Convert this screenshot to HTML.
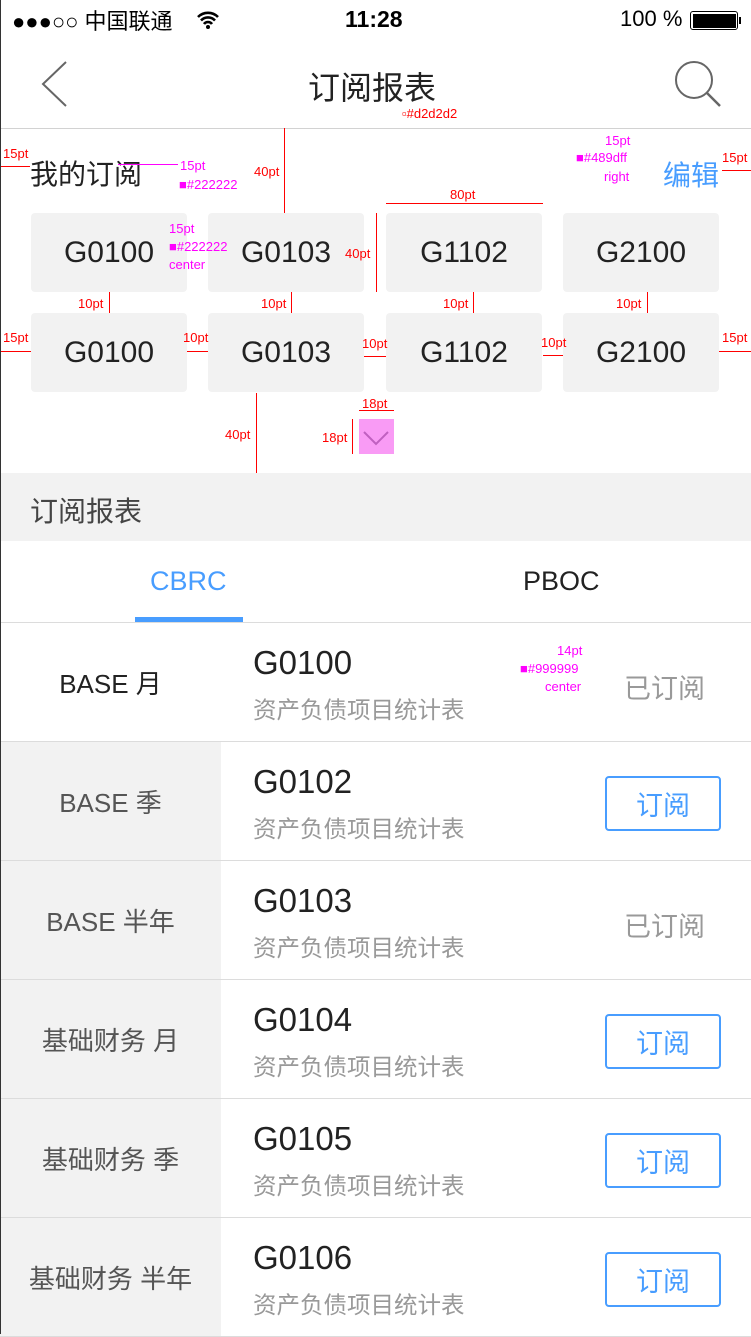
<!DOCTYPE html>
<html><head><meta charset="utf-8"><style>
*{margin:0;padding:0;box-sizing:border-box}
body{width:751px;height:1334px;position:relative;overflow:hidden;background:#fff;font-family:"Liberation Sans","Noto Sans CJK SC",sans-serif;color:#222}
.a{position:absolute;white-space:nowrap}
.tile{position:absolute;width:156px;height:79px;background:#f2f2f2;border-radius:4px;font-size:30px;color:#222;display:flex;align-items:center;justify-content:center}
.row{position:absolute;left:0;width:751px;height:119px;border-bottom:1px solid #dcdcdc}
.lc{position:absolute;left:0;top:0;width:221px;height:118px;background:#f2f2f2;display:flex;align-items:center;justify-content:center;font-size:26px;color:#555}
.code{position:absolute;left:253px;top:21px;font-size:33px;color:#222}
.sub{position:absolute;left:253px;top:68px;font-size:23.5px;color:#999}
.done{position:absolute;left:624px;top:44px;font-size:27px;color:#999}
.btn{position:absolute;left:605px;top:34px;width:116px;height:55px;border:2px solid #489dff;border-radius:4px;color:#489dff;font-size:27px;display:flex;align-items:center;justify-content:center}
.r{color:#f00;font-size:13px;position:absolute;white-space:nowrap}
.m{color:#f0f;font-size:13px;position:absolute;white-space:nowrap}
.hl{position:absolute;height:1px;background:#f00}
.vl{position:absolute;width:1px;background:#f00}
</style></head><body>
<!-- status bar -->
<div class="a" style="left:12px;top:4px;font-size:22px;color:#000">●●●○○ 中国联通</div>
<svg class="a" style="left:196px;top:10px" width="24" height="20" viewBox="0 0 24 20"><path d="M2 7a14 14 0 0 1 20 0M5 10.5a9.5 9.5 0 0 1 14 0M8 14a5 5 0 0 1 8 0" stroke="#000" stroke-width="2.6" fill="none"/><circle cx="12" cy="17" r="2" fill="#000"/></svg>
<div class="a" style="left:345px;top:6px;font-size:23px;color:#000;font-weight:bold">11:28</div>
<div class="a" style="left:620px;top:6px;font-size:22px;color:#000">100 %</div>
<div class="a" style="left:690px;top:11px;width:48px;height:19px;border:1.5px solid #000;border-radius:3px;padding:1.5px"><div style="width:100%;height:100%;background:#000"></div></div>
<div class="a" style="left:739px;top:17px;width:2px;height:7px;background:#000"></div>
<!-- nav -->
<svg class="a" style="left:40px;top:60px" width="30" height="48"><path d="M26 2L3 24L26 46" stroke="#666" stroke-width="2" fill="none"/></svg>
<div class="a" style="left:308px;top:63px;font-size:32px;color:#222">订阅报表</div>
<svg class="a" style="left:672px;top:60px" width="50" height="48"><circle cx="22" cy="20" r="18" stroke="#666" stroke-width="2" fill="none"/><path d="M35 33L48 46" stroke="#666" stroke-width="2.5"/></svg>
<div class="a" style="left:0;top:128px;width:751px;height:1px;background:#d2d2d2"></div>
<!-- my subs -->
<div class="a" style="left:30px;top:153px;font-size:28px;color:#222">我的订阅</div>
<div class="a" style="left:663px;top:154px;font-size:28px;color:#489dff">编辑</div>
<div class="tile" style="left:31px;top:213px">G0100</div>
<div class="tile" style="left:208px;top:213px">G0103</div>
<div class="tile" style="left:386px;top:213px">G1102</div>
<div class="tile" style="left:563px;top:213px">G2100</div>
<div class="tile" style="left:31px;top:313px">G0100</div>
<div class="tile" style="left:208px;top:313px">G0103</div>
<div class="tile" style="left:386px;top:313px">G1102</div>
<div class="tile" style="left:563px;top:313px">G2100</div>
<div class="a" style="left:359px;top:419px;width:35px;height:35px;background:#f99bf5"></div>
<svg class="a" style="left:359px;top:419px" width="35" height="35"><path d="M5 13L17 25L29 13" stroke="#c060c0" stroke-width="2" fill="none"/></svg>
<!-- annotations -->
<div class="r" style="left:402px;top:106px">▫#d2d2d2</div>
<div class="r" style="left:3px;top:146px">15pt</div><div class="hl" style="left:0;top:166px;width:30px"></div>
<div class="m" style="left:180px;top:158px">15pt</div><div class="a" style="left:118px;top:164px;width:60px;height:1px;background:#f0f"></div>
<div class="m" style="left:179px;top:177px">■#222222</div>
<div class="vl" style="left:284px;top:128px;height:85px"></div><div class="r" style="left:254px;top:164px">40pt</div>
<div class="m" style="left:605px;top:133px">15pt</div>
<div class="m" style="left:576px;top:150px">■#489dff</div>
<div class="m" style="left:604px;top:169px">right</div>
<div class="r" style="left:722px;top:150px">15pt</div><div class="hl" style="left:722px;top:170px;width:29px"></div>
<div class="hl" style="left:386px;top:203px;width:157px"></div><div class="r" style="left:450px;top:187px">80pt</div>
<div class="vl" style="left:376px;top:213px;height:79px"></div><div class="r" style="left:345px;top:246px">40pt</div>
<div class="m" style="left:169px;top:221px">15pt</div>
<div class="m" style="left:169px;top:239px">■#222222</div>
<div class="m" style="left:169px;top:257px">center</div>
<div class="r" style="left:78px;top:296px">10pt</div><div class="vl" style="left:109px;top:292px;height:21px"></div>
<div class="r" style="left:261px;top:296px">10pt</div><div class="vl" style="left:291px;top:292px;height:21px"></div>
<div class="r" style="left:443px;top:296px">10pt</div><div class="vl" style="left:473px;top:292px;height:21px"></div>
<div class="r" style="left:616px;top:296px">10pt</div><div class="vl" style="left:647px;top:292px;height:21px"></div>
<div class="r" style="left:3px;top:330px">15pt</div><div class="hl" style="left:0;top:351px;width:31px"></div>
<div class="r" style="left:183px;top:330px">10pt</div><div class="hl" style="left:187px;top:351px;width:21px"></div>
<div class="r" style="left:362px;top:336px">10pt</div><div class="hl" style="left:364px;top:356px;width:22px"></div>
<div class="r" style="left:541px;top:335px">10pt</div><div class="hl" style="left:543px;top:355px;width:20px"></div>
<div class="r" style="left:722px;top:330px">15pt</div><div class="hl" style="left:719px;top:351px;width:32px"></div>
<div class="vl" style="left:256px;top:393px;height:80px"></div><div class="r" style="left:225px;top:427px">40pt</div>
<div class="hl" style="left:359px;top:410px;width:35px"></div><div class="r" style="left:362px;top:396px">18pt</div>
<div class="vl" style="left:352px;top:419px;height:35px"></div><div class="r" style="left:322px;top:430px">18pt</div>
<!-- section -->
<div class="a" style="left:0;top:473px;width:751px;height:68px;background:#f2f2f2"></div>
<div class="a" style="left:30px;top:490px;font-size:28px;color:#444">订阅报表</div>
<div class="a" style="left:150px;top:566px;font-size:27px;color:#489dff">CBRC</div>
<div class="a" style="left:135px;top:617px;width:108px;height:5px;background:#489dff"></div>
<div class="a" style="left:523px;top:566px;font-size:27px;color:#222">PBOC</div>
<div class="a" style="left:0;top:622px;width:751px;height:1px;background:#dcdcdc"></div>
<div class="row" style="top:623px"><div class="lc" style="background:#fff;color:#222">BASE 月</div><div class="code">G0100</div><div class="sub">资产负债项目统计表</div><div class="done">已订阅</div>
<div class="m" style="left:557px;top:20px">14pt</div><div class="m" style="left:520px;top:38px">■#999999</div><div class="m" style="left:545px;top:56px">center</div></div>
<div class="row" style="top:742px"><div class="lc">BASE 季</div><div class="code">G0102</div><div class="sub">资产负债项目统计表</div><div class="btn">订阅</div></div>
<div class="row" style="top:861px"><div class="lc">BASE 半年</div><div class="code">G0103</div><div class="sub">资产负债项目统计表</div><div class="done">已订阅</div></div>
<div class="row" style="top:980px"><div class="lc">基础财务 月</div><div class="code">G0104</div><div class="sub">资产负债项目统计表</div><div class="btn">订阅</div></div>
<div class="row" style="top:1099px"><div class="lc">基础财务 季</div><div class="code">G0105</div><div class="sub">资产负债项目统计表</div><div class="btn">订阅</div></div>
<div class="row" style="top:1218px"><div class="lc">基础财务 半年</div><div class="code">G0106</div><div class="sub">资产负债项目统计表</div><div class="btn">订阅</div></div>
<div class="a" style="left:0;top:0;width:1px;height:1334px;background:#333;z-index:5"></div>
</body></html>
